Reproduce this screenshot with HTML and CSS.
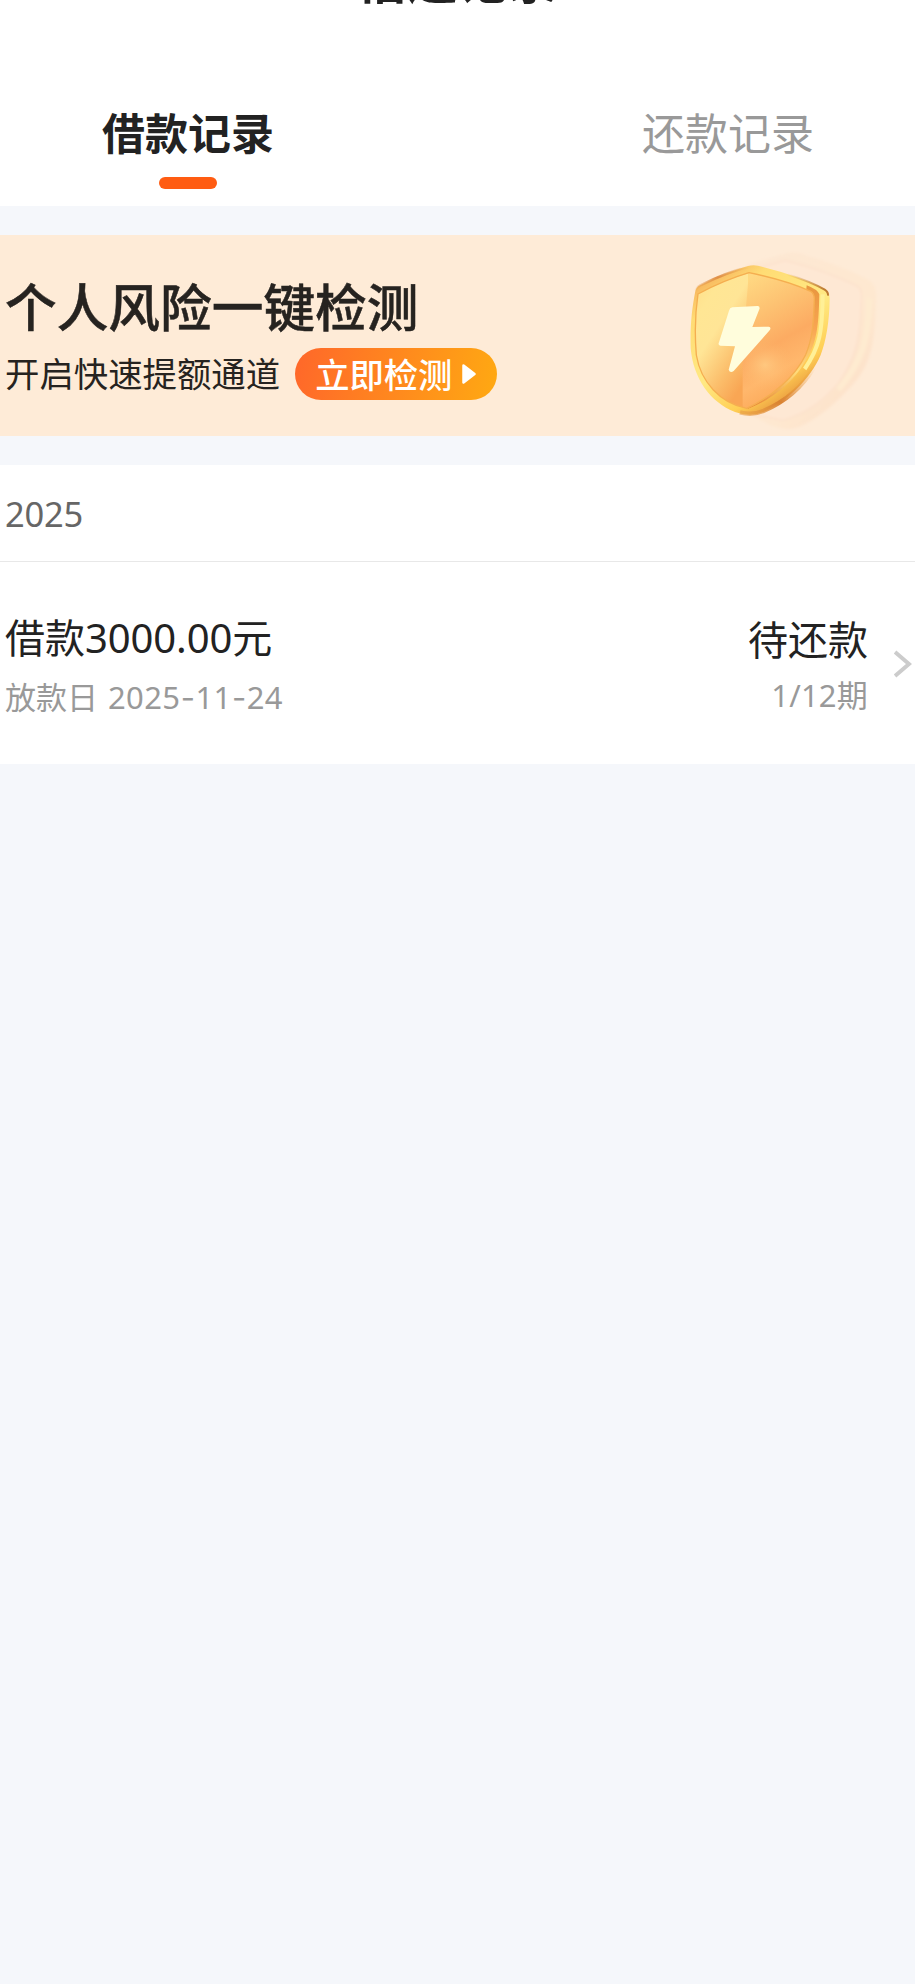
FILE: index.html
```html
<!DOCTYPE html>
<html lang="zh-CN">
<head>
<meta charset="utf-8">
<title>借还记录</title>
<link rel="stylesheet" href="styles.css">
</head>
<body>
<header class="header">
  <h1 class="header-title">借还记录</h1>
  <nav class="tabs">
    <a class="tab tab-active">借款记录</a>
    <a class="tab">还款记录</a>
  </nav>
</header>
<section class="banner">
  <div class="banner-copy">
    <h2 class="banner-title">个人风险一键检测</h2>
    <div class="banner-line">
      <span class="banner-sub">开启快速提额通道</span>
      <span class="banner-button"><span class="button-label">立即检测</span><svg class="play" viewBox="0 0 14 20"><path d="M1.5 1.5 12.500 10 1.5 18.500Z" fill="#fff" stroke="#fff" stroke-width="2.500" stroke-linejoin="round"/></svg></span>
    </div>
  </div>
  <svg class="shield" viewBox="0 30 765 603">
    <defs>
      <linearGradient id="ghost" x1="0" y1="0" x2="1" y2="1"><stop offset="0" stop-color="#fde7d3"/><stop offset=".6" stop-color="#fee8d0"/><stop offset="1" stop-color="#fcdcc4"/></linearGradient>
      <linearGradient id="rim" x1=".1" y1="0" x2=".75" y2="1"><stop offset="0" stop-color="#f3a452"/><stop offset=".22" stop-color="#ffdc74"/><stop offset=".55" stop-color="#ffe983"/><stop offset=".78" stop-color="#ffcf55"/><stop offset="1" stop-color="#dc7931"/></linearGradient>
      <linearGradient id="edge" x1="0" y1="0" x2="0" y2="1"><stop offset="0" stop-color="#e8963f"/><stop offset=".35" stop-color="#f8a551"/><stop offset=".7" stop-color="#ffdc7b"/><stop offset="1" stop-color="#e68232"/></linearGradient>
      <linearGradient id="left" x1="0" y1="0" x2=".6" y2="1"><stop offset="0" stop-color="#ffdc86"/><stop offset=".25" stop-color="#ffe694"/><stop offset=".48" stop-color="#ffe596"/><stop offset=".8" stop-color="#fbbd6a"/><stop offset="1" stop-color="#f9a654"/></linearGradient>
      <linearGradient id="right" x1=".2" y1="0" x2=".5" y2="1"><stop offset="0" stop-color="#ffd882"/><stop offset=".28" stop-color="#fdc272"/><stop offset=".55" stop-color="#fcab62"/><stop offset=".75" stop-color="#ffb76c"/><stop offset="1" stop-color="#fba654"/></linearGradient>
      <radialGradient id="glow"><stop offset="0" stop-color="#ffcd85" stop-opacity=".8"/><stop offset="1" stop-color="#ffb76c" stop-opacity="0"/></radialGradient>
      <linearGradient id="shade-left" x1="0" y1="1" x2="1" y2="0"><stop offset="0" stop-color="#df9447" stop-opacity="0"/><stop offset=".5" stop-color="#e08f45"/><stop offset="1" stop-color="#df9447" stop-opacity="0"/></linearGradient>
      <linearGradient id="shade-right" x1="0" y1="0" x2="1" y2=".6"><stop offset="0" stop-color="#c98537" stop-opacity="0"/><stop offset="1" stop-color="#bd7a32"/></linearGradient>
      <linearGradient id="shade-low" x1="1" y1="0" x2="0" y2="1"><stop offset="0" stop-color="#f0a63e" stop-opacity="0"/><stop offset=".6" stop-color="#d98232"/><stop offset="1" stop-color="#e9a047" stop-opacity=".6"/></linearGradient>
      <filter id="soft" x="-10%" y="-10%" width="120%" height="120%"><feGaussianBlur stdDeviation="4"/></filter>
      <filter id="blend" x="-20%" y="-20%" width="140%" height="140%"><feGaussianBlur stdDeviation="2"/></filter>
    </defs>
    <g filter="url(#soft)">
      <path d="M255 122Q330 98 385 84Q410 80 435 90Q540 120 625 164Q650 178 648 215C645 330 640 400 590 465Q500 570 415 607Q380 620 330 600L255 560Z" fill="url(#ghost)"/>
      <path d="M375 106Q500 138 590 182Q606 190 605 215C602 330 590 400 535 475Q470 555 370 586L260 565V140Z" fill="#fee8d4" stroke="#fcdfca" stroke-width="4"/>
      <path d="M628 220C625 350 605 410 535 494" fill="none" stroke="#feebd0" stroke-width="18"/>
    </g>
    <path d="M106 198Q108 187 120 181Q205 139 264 123Q278 119 294 122Q410 150 496 192Q510 200 509 224C508 290 498 348 482 390C449 465 380 530 310 561Q270 578 225 561C150 532 100 460 92 370C90 300 96 250 106 198Z" fill="url(#rim)"/>
    <g filter="url(#blend)">
      <path d="M107 199Q109 187 121 181Q205 140 264 126" fill="none" stroke="url(#shade-left)" stroke-width="8"/>
      <path d="M380 147Q455 171 494 194Q505 201 504 212" fill="none" stroke="url(#shade-right)" stroke-width="6"/>
      <path d="M440 181Q472 193 478 208C476 300 472 355 434 412C397 476 328 528 264 551L252 541L420 410Z" fill="url(#edge)"/>
      <path d="M488 208C487 320 480 365 434 432" fill="none" stroke="#fff097" stroke-width="12"/>
      <path d="M462 427C425 490 370 532 310 558Q275 572 240 562" fill="none" stroke="url(#shade-low)" stroke-width="13"/>
    </g>
    <path d="M114 207Q190 166 265 145V550C180 535 122 470 109 390C104 330 106 260 114 207Z" fill="url(#left)"/>
    <path d="M267 143Q380 166 452 199Q462 205 463 220C461 300 456 345 437 389C405 456 335 515 264 550L248 548V360Z" fill="url(#right)"/>
    <ellipse cx="315" cy="420" rx="85" ry="75" fill="url(#glow)"/>
    <path d="M267 143Q380 166 452 199Q462 205 463 220C461 300 456 345 437 389C405 456 335 515 260 550C180 535 122 470 109 390C104 330 106 260 114 207Q190 166 267 143Z" fill="none" stroke="#f5ae50" stroke-width="4"/>
    <path d="M217 247 293 243Q301 244 298 253L277 306 326 305Q335 307 329 316L221 438Q210 445 206 434L225 364 181 362Q173 360 177 352L207 257Q209 248 217 247Z" fill="#fffddc"/>
  </svg>
</section>
<main class="records">
  <div class="year">2025</div>
  <article class="record">
    <div class="record-main">
      <div class="record-title">借款<span class="amount">3000.00</span>元</div>
      <div class="record-note">放款日 <span class="date">2025<span class="dash">-</span>11<span class="dash">-</span>24</span></div>
    </div>
    <div class="record-state">
      <div class="record-title">待还款</div>
      <div class="record-note">1/12期</div>
    </div>
    <svg class="chevron" viewBox="0 0 18 28"><path d="M1 2 15 14 1 26" fill="none" stroke="#ccc" stroke-width="4"/></svg>
  </article>
</main>
</body>
</html>
```
FILE: styles.css
```css
* { box-sizing: border-box; }
body {
  margin: 0;
  min-height: 1984px;
  background: #f5f7fb;
  color: #222;
  font-family: "Noto Sans", "Noto Sans CJK SC", sans-serif;
  overflow-x: hidden;
}
.header { height: 206px; background: #fff; overflow: hidden; }
.header-title {
  margin: -57px 0 0;
  font-size: 50px;
  line-height: 68px;
  font-weight: 700;
  text-align: center;
  font-family: "Noto Sans CJK SC", sans-serif;
}
.tabs { display: flex; justify-content: space-between; padding: 90px 101px 0 102px; }
.tab {
  display: flex;
  flex-direction: column;
  align-items: center;
  height: 102px;
  font: 400 43px/60px "Noto Sans CJK SC", sans-serif;
  color: #999;
}
.tab-active { color: #222; font-weight: 700; }
.tab-active::after {
  content: "";
  width: 58px;
  height: 12px;
  margin-top: 16px;
  border-radius: 6px;
  background: #ff5c12;
}
.banner {
  display: flex;
  justify-content: space-between;
  height: 201px;
  margin: 29px 0;
  background: #feebd7;
  font-family: "Noto Sans CJK SC", sans-serif;
}
.banner-copy { padding: 34px 0 0 5px; color: #262320; }
.banner-title { margin: 0; font-size: 51.7px; line-height: 72px; font-weight: 500; -webkit-text-stroke: .5px #262320; }
.banner-line { display: flex; align-items: center; gap: 15px; margin-top: 7px; }
.banner-sub { margin-top: -4px; font-size: 34.4px; line-height: 52px; }
.banner-button {
  display: flex;
  align-items: center;
  gap: 10px;
  width: 202px;
  height: 52px;
  padding-left: 20px;
  border-radius: 26px;
  background: linear-gradient(100deg, #ff672a, #ffa912);
  color: #fff;
  font-size: 34.3px;
  line-height: 52px;
  font-weight: 500;
}
.button-label { margin-top: -3px; }
.play { width: 14px; height: 20px; }
.shield { width: 255px; height: 201px; }
.records { height: 299px; background: #fff; }
.year {
  height: 97px;
  padding-left: 5px;
  border-bottom: 1px solid #e8e8e8;
  font-size: 34.5px;
  line-height: 97px;
  letter-spacing: -.2px;
  color: #666;
}
.record { display: flex; align-items: flex-start; height: 202px; padding: 48px 3px 0 5px; }
.record-main { flex: 1; }
.record-state { padding-top: 2px; text-align: right; }
.record-title { font-size: 40px; line-height: 56px; }
.record-note { margin-top: 9px; font-size: 31px; line-height: 44px; color: #999; }
.record-state .record-note { margin-top: 5px; letter-spacing: .2px; }
.amount { letter-spacing: -.1px; }
.date { margin-left: 2px; letter-spacing: .3px; }
.dash { font-family: Inter, sans-serif; letter-spacing: 0; margin: 0 .5px; }
.chevron { width: 18px; height: 28px; margin: 40px 0 0 26px; }
```
